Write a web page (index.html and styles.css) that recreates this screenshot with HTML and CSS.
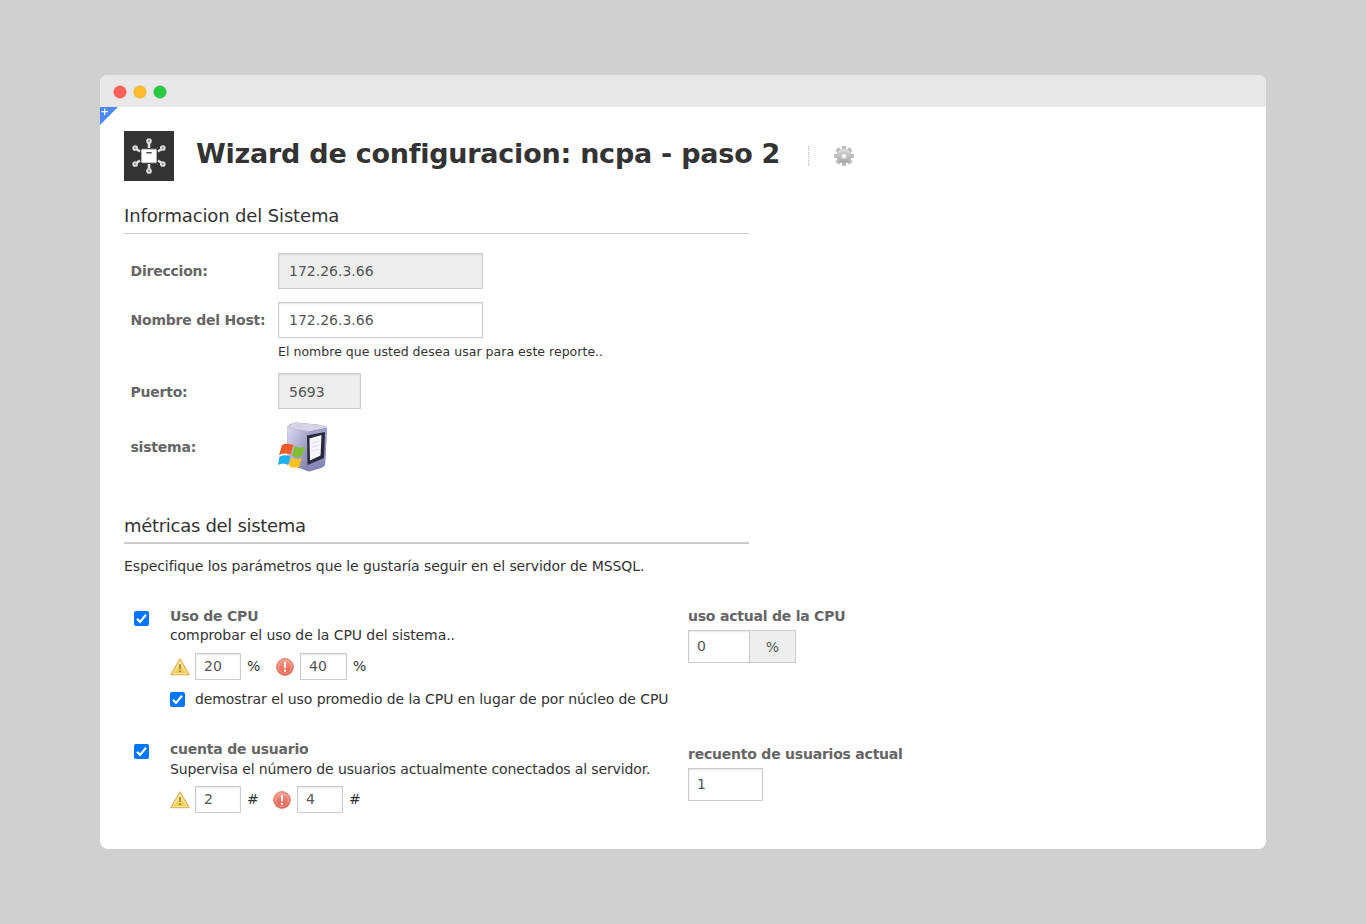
FILE: index.html
```html
<!DOCTYPE html>
<html lang="es">
<head>
<meta charset="utf-8">
<title>Wizard de configuracion</title>
<link rel="stylesheet" href="styles.css">
</head>
<body>
<svg width="0" height="0" class="defs">
  <defs>
    <linearGradient id="warnFill" x1="0" y1="0" x2="0" y2="1"><stop offset="0" stop-color="#fdf3a8"/><stop offset="1" stop-color="#f1c342"/></linearGradient>
    <linearGradient id="critFill" x1="0" y1="0" x2="0" y2="1"><stop offset="0" stop-color="#f4a08e"/><stop offset="1" stop-color="#e55345"/></linearGradient>
    <linearGradient id="gearFill" x1="0" y1="0" x2="0" y2="1"><stop offset="0" stop-color="#dedede"/><stop offset="1" stop-color="#a4a4a4"/></linearGradient>
    <linearGradient id="sideFill" x1="0" y1="0" x2="1" y2="1"><stop offset="0" stop-color="#dcdcf4"/><stop offset="1" stop-color="#7d7ba8"/></linearGradient>
    <linearGradient id="frontFill" x1="0" y1="0" x2="0" y2="1"><stop offset="0" stop-color="#a5a4cd"/><stop offset="1" stop-color="#8583b4"/></linearGradient>
    <symbol id="warn" viewBox="0 0 20 18">
      <path d="M10 1.200 19 16.600H1Z" fill="url(#warnFill)" stroke="#e3b45c" stroke-width="1.500" stroke-linejoin="round"/>
      <path d="M10 3.400 17 15.500H3Z" fill="none" stroke="#fff5bd" stroke-width=".8"/>
      <path d="M9 6.300h2l-.35 5h-1.300Z" fill="#a08030"/><circle cx="10" cy="13.200" r="1" fill="#a08030"/>
    </symbol>
    <symbol id="crit" viewBox="0 0 18 18">
      <circle cx="9" cy="9" r="8.400" fill="url(#critFill)" stroke="#e08072" stroke-width="1"/>
      <circle cx="9" cy="9" r="6.400" fill="none" stroke="#f6b5a8" stroke-width=".8"/>
      <path d="M7.900 4h2.200l-.3 6.200H8.200Z" fill="#fff"/><circle cx="9" cy="12.700" r="1.200" fill="#fff"/>
    </symbol>
  </defs>
</svg>
<div class="window">
  <div class="titlebar"><svg width="54" height="14" viewBox="0 0 54 14"><g stroke-width=".8"><circle cx="7" cy="7" r="6.100" fill="#ff5f57" stroke="#f0564e"/><circle cx="27" cy="7" r="6.100" fill="#ffbd2e" stroke="#eda928"/><circle cx="47" cy="7" r="6.100" fill="#28ca42" stroke="#22bb3a"/></g></svg></div>
  <div class="page">
    <svg class="corner" width="18" height="18" viewBox="0 0 18 18"><path d="M0 0H18L0 18Z" fill="#4d89f9"/><path d="M1.500 4.700H8M4.700 1.500V8" stroke="#fff" stroke-width="1.200"/></svg>
    <header class="header">
      <svg class="logo" width="50" height="50" viewBox="0 0 50 50">
        <path fill="#333" d="M0 0h50v50H0z"/>
        <path d="M25 17v-5M25 33v5M34 20.500l3-2M16 20.500l-3-2M34 29.500l3 2M16 29.500l-3 2" stroke="#ddd" stroke-width="2.600"/>
        <g fill="#999" stroke="#ddd" stroke-width="1.700"><circle cx="25" cy="10" r="2"/><circle cx="25" cy="40" r="2"/><circle cx="11.200" cy="17" r="2"/><circle cx="38.800" cy="17" r="2"/><circle cx="11.200" cy="33" r="2"/><circle cx="38.800" cy="33" r="2"/></g>
        <rect x="17.500" y="18.200" width="15" height="13.600" rx=".8" fill="#fff" stroke="#bbb" stroke-width=".7"/><path d="M22.300 21.800h5.400" stroke="#555" stroke-width="1.500"/>
      </svg>
      <h1>Wizard de configuracion: ncpa - paso 2</h1>
      <i class="divider"></i>
      <svg class="gear" width="20" height="20" viewBox="0 0 20 20">
        <g stroke="#a9a9a9" stroke-width="4.200"><path d="M10 .3V19.700M.3 10H19.700M3.100 3.100 16.900 16.900M16.900 3.100 3.100 16.900"/></g>
        <g stroke="#c6c6c6" stroke-width="2.800"><path d="M10 1V19M1 10H19M3.800 3.800 16.200 16.200M16.200 3.800 3.800 16.200"/></g>
        <circle cx="10" cy="10" r="7.300" fill="url(#gearFill)"/><circle cx="10" cy="10" r="3.300" fill="#ddd" stroke="#b2b2b2" stroke-width=".8"/><circle cx="10" cy="10" r="1.700" fill="#fff"/>
      </svg>
    </header>

    <h2 class="first">Informacion del Sistema</h2>
    <div class="form">
      <b>Direccion:</b>
      <div class="field wide disabled">172.26.3.66</div>
      <b>Nombre del Host:</b>
      <div class="field wide">172.26.3.66</div>
      <p class="help">El nombre que usted desea usar para este reporte..</p>
      <b class="port-label">Puerto:</b>
      <div class="field port disabled">5693</div>
      <b class="system-label">sistema:</b>
      <svg width="50" height="52" viewBox="0 0 50 52">
        <path d="M9 6Q10 3 18 1.500L43 4Q49 5 49 8L47 44Q46 47 31 50.500L10 43Z" fill="#807eaa"/>
        <path d="M9 6 31 10V50L10 43Z" fill="url(#sideFill)"/>
        <path d="M9 6Q11 3 18 1.500L43 4Q48 5 48 7L31 10.500Z" fill="#d4d4e6"/>
        <path d="M31 10.500 49 7.500 47 44 31 50Z" fill="url(#frontFill)"/>
        <path d="M29 14.500 47 11 46 37 29.500 44Z" fill="#292b3d"/>
        <path d="M31.500 17.500 43.500 14 42.500 34.500 32 39.500Z" fill="#f5f6fc"/>
        <path d="M34 22l7.500-2M34 26l7.500-2M34 30l7-2" stroke="#dde0ec" stroke-width="1"/>
        <path d="M4 24Q9 21.500 15.500 24L12.700 33.500Q7 31.500 1 34Z" fill="#f05b29"/>
        <path d="M16.700 25Q21 28 27 25.500L24 35Q19 37.500 14 34.500Z" fill="#80bd32"/>
        <path d="M1.500 35.500Q7 33 12.300 35.500L10 44Q5 41.500 0 44Z" fill="#1fb1e9"/>
        <path d="M13.500 36.500Q18 39.500 23.500 37L21 46Q15 48 11 45Z" fill="#ffc112"/>
      </svg>
    </div>

    <h2 class="second">métricas del sistema</h2>
    <p class="intro">Especifique los parámetros que le gustaría seguir en el servidor de MSSQL.</p>

    <section class="metric cpu">
      <svg class="check" width="15" height="15" viewBox="0 0 15 15"><rect width="15" height="15" rx="2" fill="#0075ff"/><path d="M3 7.800 6 10.900 12 3.800" fill="none" stroke="#fff" stroke-width="2.200"/></svg>
      <div class="main">
        <b>Uso de CPU</b>
        <p>comprobar el uso de la CPU del sistema..</p>
        <div class="limits">
          <svg class="warn" width="20" height="18"><use href="#warn"/></svg><div class="field small">20</div><span class="unit">%</span>
          <svg class="crit" width="18" height="18"><use href="#crit"/></svg><div class="field small">40</div><span class="unit">%</span>
        </div>
        <div class="option">
          <svg width="15" height="15" viewBox="0 0 15 15"><rect width="15" height="15" rx="2" fill="#0075ff"/><path d="M3 7.800 6 10.900 12 3.800" fill="none" stroke="#fff" stroke-width="2.200"/></svg>
          <span>demostrar el uso promedio de la CPU en lugar de por núcleo de CPU</span>
        </div>
      </div>
      <div class="current">
        <b>uso actual de la CPU</b>
        <div class="group"><div class="field value">0</div><div class="addon">%</div></div>
      </div>
    </section>

    <section class="metric users">
      <svg class="check" width="15" height="15" viewBox="0 0 15 15"><rect width="15" height="15" rx="2" fill="#0075ff"/><path d="M3 7.800 6 10.900 12 3.800" fill="none" stroke="#fff" stroke-width="2.200"/></svg>
      <div class="main">
        <b>cuenta de usuario</b>
        <p>Supervisa el número de usuarios actualmente conectados al servidor.</p>
        <div class="limits">
          <svg class="warn" width="20" height="18"><use href="#warn"/></svg><div class="field small">2</div><span class="unit hash">#</span>
          <svg class="crit" width="18" height="18"><use href="#crit"/></svg><div class="field small">4</div><span class="unit hash">#</span>
        </div>
      </div>
      <div class="current">
        <b>recuento de usuarios actual</b>
        <div class="field value single">1</div>
      </div>
    </section>
  </div>
</div>
</body>
</html>
```
FILE: styles.css
```css
* { box-sizing: border-box; }
body { margin: 0; height: 924px; overflow: hidden; background: #d0d0d0; padding: 75px 100px; font: 14px/20px Verdana, "DejaVu Sans", sans-serif; color: #333; }
.defs { position: absolute; }
h1, h2, p { margin: 0; font-weight: normal; }
span, b, p, .field, h1 { white-space: nowrap; }
svg { display: block; flex: none; }
b { color: #666; letter-spacing: -.22px; }
.window { height: 774px; border-radius: 8px; background: #fff; overflow: hidden; }
.titlebar { height: 32px; background: #e8e8e8; padding: 10px 0 0 13px; }
.page { position: relative; padding: 24px; }
.corner { position: absolute; left: 0; top: 0; }

.header { display: flex; height: 50px; }
h1 { margin-left: 22px; width: 612px; font-size: 27px; line-height: 45px; font-weight: bold; letter-spacing: -.24px; }
.divider { width: 1px; height: 20px; margin-top: 15px; background: repeating-linear-gradient(#bbb 0 1px, #fff 1px 2px); }
.gear { margin: 15px 0 0 25px; }

h2 { width: 625px; font-size: 18px; }
.first { margin-top: 23px; height: 30px; line-height: 24px; border-bottom: 1px solid #ccc; letter-spacing: -.14px; }
.second { margin-top: 41px; height: 30px; line-height: 24px; border-bottom: 2px solid #ccc; letter-spacing: -.3px; }

.form { display: grid; grid-template-columns: 147.5px 1fr; grid-template-rows: 49px 36px 35px 48px 52px; align-items: start; margin-top: 19px; padding-left: 6.5px; }
.form b { line-height: 36px; }
.form .port-label { line-height: 38px; }
.form .system-label { line-height: 52px; }
.help { grid-column: 2; font-size: 12.5px; line-height: 28px; letter-spacing: .03px; }

.field { border: 1px solid #ccc; background: #fff; box-shadow: inset 0 1px 2px rgba(0,0,0,.1); color: #555; padding-left: 10px; height: 36px; line-height: 34px; }
.disabled, .addon { background: #eee; }
.wide { width: 205px; }
.port { width: 83px; line-height: 36px; }
.intro { margin-top: 12px; letter-spacing: -.093px; }

.metric { display: grid; grid-template-columns: 36px 518px 1fr; padding-left: 10px; }
.cpu { margin-top: 30px; height: 133px; }
.check { margin-top: 5px; }
.metric b, .metric p { display: block; line-height: 20px; }
.cpu .main p { margin-top: -1px; letter-spacing: -.075px; }
.users .main p { letter-spacing: -.13px; }
.limits { display: flex; align-items: center; margin-top: 8px; height: 27px; }
.users .limits { margin-top: 7px; }
.small { width: 46px; height: 27px; line-height: 25px; padding-left: 8px; margin-left: 5px; }
.crit + .small { width: 47px; margin-left: 6px; }
.users .crit + .small { width: 46px; }
.warn, .crit { margin-top: 1px; }
.unit { width: 29px; margin-left: 6px; line-height: 18px; padding-bottom: 2px; }
.unit.hash { width: 26px; }
.option { display: flex; align-items: center; margin-top: 9px; height: 20px; gap: 10px; letter-spacing: -.09px; }
.users .current { padding-top: 5px; }
.group { display: flex; margin-top: 4px; }
.value { width: 62px; height: 33px; line-height: 31px; padding-left: 8px; }
.addon { width: 46px; height: 33px; line-height: 33px; text-align: center; border: 1px solid #ccc; border-left: 0; color: #555; }
.single { width: 75px; margin-top: 4px; }
```
